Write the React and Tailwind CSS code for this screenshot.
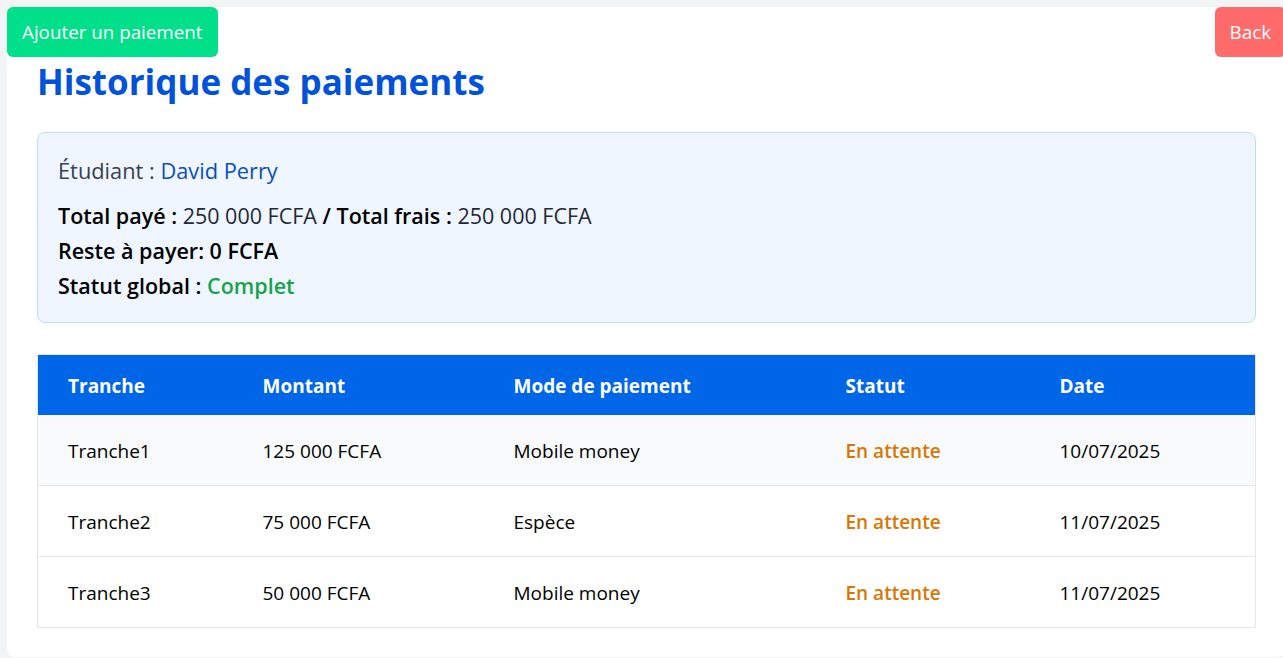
import React from "react";

const rows = [
  { t: "Tranche1", m: "125 000 FCFA", mode: "Mobile money", s: "En attente", d: "10/07/2025", bg: "bg-[#f8fafc]" },
  { t: "Tranche2", m: "75 000 FCFA", mode: "Espèce", s: "En attente", d: "11/07/2025", bg: "bg-white" },
  { t: "Tranche3", m: "50 000 FCFA", mode: "Mobile money", s: "En attente", d: "11/07/2025", bg: "bg-white" },
];

export default function App() {
  return (
    <div
      className="w-[1283px] h-[658px] overflow-hidden bg-[#f3f4f6] pt-[7px] pl-[7px]"
      style={{ fontFamily: '"Open Sans", "Noto Sans", sans-serif' }}
    >
      <div className="w-[1279px] h-[650px] bg-white rounded-lg">
        <div className="flex justify-between">
          <button className="h-[50px] px-[15px] rounded-md bg-[#00df89] text-white text-[18.8px]">
            Ajouter un paiement
          </button>
          <button className="h-[50px] px-[15px] rounded-md bg-[#ff6b6b] text-white text-[18.8px]">
            Back
          </button>
        </div>
        <div className="px-[30px]">
          <h1 className="text-[35px] leading-[48px] font-bold text-[#0052d9] mt-[1px]">
            Historique des paiements
          </h1>
          <div className="mt-[26px] w-[1219px] h-[191px] rounded-lg border border-[#bfdbfe] bg-[#eff6ff] px-[20px] pt-[23px]">
            <div className="text-[21.8px] leading-[30px] text-[#374151]">
              Étudiant : <span className="text-[#0b4fb8]">David Perry</span>
            </div>
            <div className="mt-[12px] text-[21.5px] leading-[35px] text-black">
              <div>
                <span className="font-semibold">Total payé :</span>{" "}
                <span className="text-[#1f2937]">250 000 FCFA</span>{" "}
                <span className="font-semibold">/ Total frais :</span>{" "}
                <span className="text-[#1f2937]">250 000 FCFA</span>
              </div>
              <div className="font-semibold">Reste à payer: 0 FCFA</div>
              <div>
                <span className="font-semibold">Statut global :</span>{" "}
                <span className="text-[#16a34a] font-semibold">Complet</span>
              </div>
            </div>
          </div>
          <table className="mt-[31px] w-[1219px] border-collapse border border-[#e5e7eb] text-[19px]">
            <thead>
              <tr className="bg-[#0066e8] text-white h-[60px]">
                <th className="text-left font-bold pl-[30px] pt-[2px] w-[225px]">Tranche</th>
                <th className="text-left font-bold pt-[2px] w-[251px]">Montant</th>
                <th className="text-left font-bold pt-[2px] w-[332px]">Mode de paiement</th>
                <th className="text-left font-bold pt-[2px] w-[214px]">Statut</th>
                <th className="text-left font-bold pt-[2px]">Date</th>
              </tr>
            </thead>
            <tbody>
              {rows.map((r) => (
                <tr key={r.t} className={`${r.bg} h-[71px] border-b border-[#e5e7eb] text-black`}>
                  <td className="pl-[30px] pt-[2px]">{r.t}</td>
                  <td className="pt-[2px]">{r.m}</td>
                  <td className="pt-[2px]">{r.mode}</td>
                  <td className="pt-[2px] font-semibold text-[#d97706]">{r.s}</td>
                  <td className="pt-[2px]">{r.d}</td>
                </tr>
              ))}
            </tbody>
          </table>
        </div>
      </div>
    </div>
  );
}
